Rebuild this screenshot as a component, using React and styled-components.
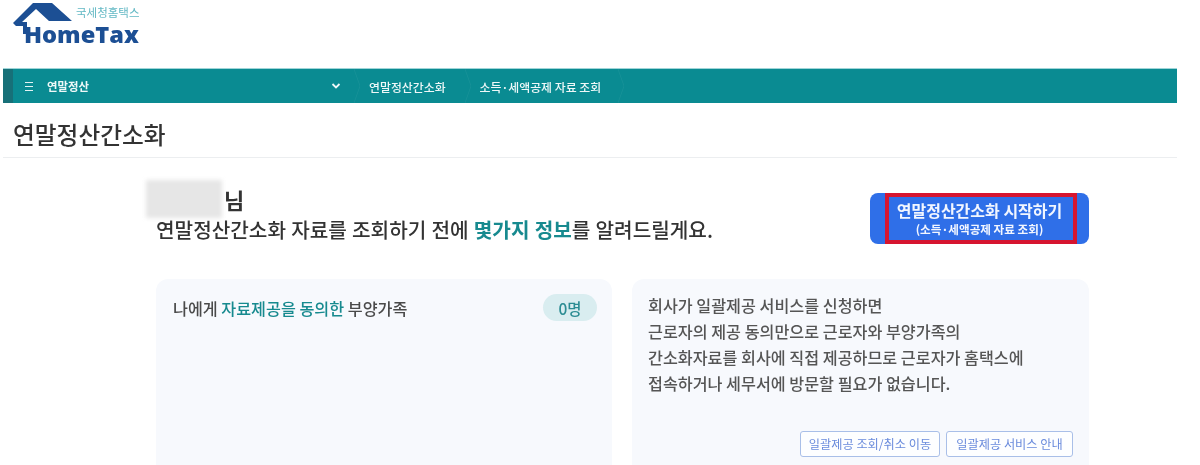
import React from "react"
import styled, { createGlobalStyle } from "styled-components"

const GlobalStyle = createGlobalStyle`
  html, body {
    margin: 0;
    padding: 0;
    background: #fff;
  }
  body {
    font-family: "Noto Sans CJK KR", "Noto Sans", sans-serif;
  }
`

const Page = styled.div`
  width: 1200px;
  height: 465px;
  overflow: hidden;
  background: #fff;
  filter: blur(0.6px);
`

const Header = styled.header`
  height: 69px;
  padding: 2px 0 0 12px;
  box-sizing: border-box;
`

const Logo = styled.div`
  position: relative;
  width: 130px;
  height: 44px;
`

const LogoSub = styled.span`
  position: absolute;
  left: 64px;
  top: 4px;
  font-size: 11.5px;
  line-height: 12px;
  color: #62b8c4;
  white-space: nowrap;
`

const LogoWord = styled.span`
  position: absolute;
  left: 12px;
  top: 20px;
  font-family: "Open Sans", sans-serif;
  font-size: 23.6px;
  line-height: 24px;
  font-weight: 800;
  color: #1c4f94;
`

const NavBar = styled.nav`
  height: 34px;
  margin: 0 23px 0 3px;
  display: flex;
  align-items: center;
  background: #0a8b92;
  border-left: 10px solid #177078;
  box-shadow: 0 -1px 0 #9fd5d8;
  color: #eef8f8;
  font-size: 11.9px;
  font-weight: 500;
`

const MenuIcon = styled.span`
  width: 8px;
  height: 7px;
  margin-left: 12px;
  border-top: 1px solid #e3f3f4;
  border-bottom: 1px solid #e3f3f4;
  position: relative;
  &::after {
    content: "";
    position: absolute;
    left: 0;
    right: 0;
    top: 3px;
    height: 1px;
    background: #e3f3f4;
  }
`

const NavRoot = styled.span`
  width: 284px;
  margin-left: 14px;
  font-size: 11.4px;
  font-weight: 700;
`

const NavCrumb = styled.span`
  margin-left: 9px;
  white-space: nowrap;
`

const Chevron = styled.svg`
  width: 10px;
  height: 10px;
`

const Separator = styled.svg`
  width: 6px;
  height: 34px;
  margin-left: ${({ $gap }) => $gap}px;
`

const Title = styled.h1`
  height: 55px;
  margin: 0 23px 0 3px;
  padding: 16px 0 0 10px;
  box-sizing: border-box;
  border-bottom: 1px solid #eceef0;
  font-size: 23.7px;
  line-height: 30px;
  font-weight: 500;
  color: #333;
`

const Content = styled.main`
  width: 933px;
  margin-left: 156px;
`

const Intro = styled.section`
  height: 121px;
  display: flex;
  justify-content: space-between;
  align-items: flex-start;
`

const Greeting = styled.div`
  padding-top: 21px;
`

const NameRow = styled.div`
  display: flex;
  align-items: flex-end;
  height: 39px;
  margin-left: -10px;
`

const BlurredName = styled.div`
  width: 76px;
  height: 38px;
  margin-right: 2px;
  background: #e6e6e6;
  filter: blur(2px);
`

const NameSuffix = styled.span`
  font-size: 22px;
  line-height: 38px;
  font-weight: 700;
  color: #333;
`

const Sentence = styled.p`
  margin: -1px 0 0;
  font-size: 20.2px;
  line-height: 26px;
  font-weight: 500;
  word-spacing: 0.6px;
  color: #333;
  white-space: nowrap;
`

const Teal = styled.span`
  color: #178a8f;
  font-weight: ${({ $bold }) => ($bold ? 700 : "inherit")};
`

const StartButton = styled.button`
  position: relative;
  width: 219px;
  height: 51px;
  margin-top: 35px;
  padding: 0;
  border: 0;
  border-radius: 8px;
  background: #2f6fe8;
  color: #f2f6ff;
  font-family: inherit;
  display: flex;
  flex-direction: column;
  align-items: center;
  justify-content: center;
  gap: 4px;
`

const StartLabel = styled.span`
  font-size: 16px;
  line-height: 18px;
  font-weight: 700;
  white-space: nowrap;
`

const StartHint = styled.span`
  font-size: 11.6px;
  line-height: 13px;
  font-weight: 700;
  white-space: nowrap;
`

const Highlight = styled.span`
  position: absolute;
  left: 15px;
  right: 12px;
  top: 0;
  bottom: 0;
  border: 4px solid #d6152f;
  box-sizing: border-box;
`

const Cards = styled.section`
  display: grid;
  grid-template-columns: 456px 457px;
  gap: 20px;
`

const Card = styled.div`
  height: 200px;
  box-sizing: border-box;
  background: #f7f9fd;
  border-radius: 12px;
`

const ConsentCard = styled(Card)`
  padding: 15px 15px 0 17px;
`

const ConsentRow = styled.div`
  display: flex;
  justify-content: space-between;
  align-items: center;
  font-size: 16.2px;
  font-weight: 500;
  color: #4a4a4a;
`

const Badge = styled.span`
  width: 54px;
  height: 27px;
  border-radius: 14px;
  background: #d9edf0;
  color: #2b8c93;
  font-size: 15.5px;
  font-weight: 500;
  display: flex;
  align-items: center;
  justify-content: center;
`

const NoticeCard = styled(Card)`
  padding: 13px 16px 0 16px;
`

const NoticeText = styled.p`
  margin: 0;
  font-size: 16.2px;
  line-height: 26px;
  font-weight: 500;
  color: #555;
  white-space: pre-line;
`

const NoticeActions = styled.div`
  display: flex;
  justify-content: flex-end;
  gap: 6px;
  margin-top: 35px;
`

const OutlineButton = styled.button`
  width: ${({ $width }) => $width}px;
  height: 26px;
  padding: 0;
  border: 1px solid #a9bfe8;
  border-radius: 3px;
  background: #fdfeff;
  color: #6a8bdc;
  font-family: inherit;
  font-size: 12.2px;
`

const notice = `회사가 일괄제공 서비스를 신청하면
근로자의 제공 동의만으로 근로자와 부양가족의
간소화자료를 회사에 직접 제공하므로 근로자가 홈택스에
접속하거나 세무서에 방문할 필요가 없습니다.`

const CrumbSeparator = ({ gap }) => (
  <Separator $gap={gap} viewBox="0 0 6 34">
    <path d="M0 0 L6 17 L0 34" fill="none" stroke="#ffffff" strokeOpacity="0.05" strokeWidth="1" />
  </Separator>
)

export default function App() {
  return (
    <>
      <GlobalStyle />
      <Page>
        <Header>
          <Logo>
            <svg width="64" height="32" viewBox="0 0 64 32">
              <path d="M1 21 L21 1 H40 L60 19 H37 L24 7 L10 20 H15 V32 H11 V24 H7 L4 24 Z" fill="#1c4f94" />
            </svg>
            <LogoSub>국세청홈택스</LogoSub>
            <LogoWord>HomeTax</LogoWord>
          </Logo>
        </Header>
        <NavBar>
          <MenuIcon />
          <NavRoot>연말정산</NavRoot>
          <Chevron viewBox="0 0 10 10">
            <path d="M1.5 3 L5 6.5 L8.5 3" fill="none" stroke="#eef8f8" strokeWidth="1.8" />
          </Chevron>
          <CrumbSeparator gap={13} />
          <NavCrumb>연말정산간소화</NavCrumb>
          <CrumbSeparator gap={19} />
          <NavCrumb>소득·세액공제 자료 조회</NavCrumb>
          <CrumbSeparator gap={17} />
        </NavBar>
        <Title>연말정산간소화</Title>
        <Content>
          <Intro>
            <Greeting>
              <NameRow>
                <BlurredName />
                <NameSuffix>님</NameSuffix>
              </NameRow>
              <Sentence>
                연말정산간소화 자료를 조회하기 전에 <Teal $bold>몇가지 정보</Teal>를 알려드릴게요.
              </Sentence>
            </Greeting>
            <StartButton>
              <StartLabel>연말정산간소화 시작하기</StartLabel>
              <StartHint>(소득·세액공제 자료 조회)</StartHint>
              <Highlight />
            </StartButton>
          </Intro>
          <Cards>
            <ConsentCard>
              <ConsentRow>
                <span>
                  나에게 <Teal>자료제공을 동의한</Teal> 부양가족
                </span>
                <Badge>0명</Badge>
              </ConsentRow>
            </ConsentCard>
            <NoticeCard>
              <NoticeText>{notice}</NoticeText>
              <NoticeActions>
                <OutlineButton $width={140}>일괄제공 조회/취소 이동</OutlineButton>
                <OutlineButton $width={127}>일괄제공 서비스 안내</OutlineButton>
              </NoticeActions>
            </NoticeCard>
          </Cards>
        </Content>
      </Page>
    </>
  )
}
